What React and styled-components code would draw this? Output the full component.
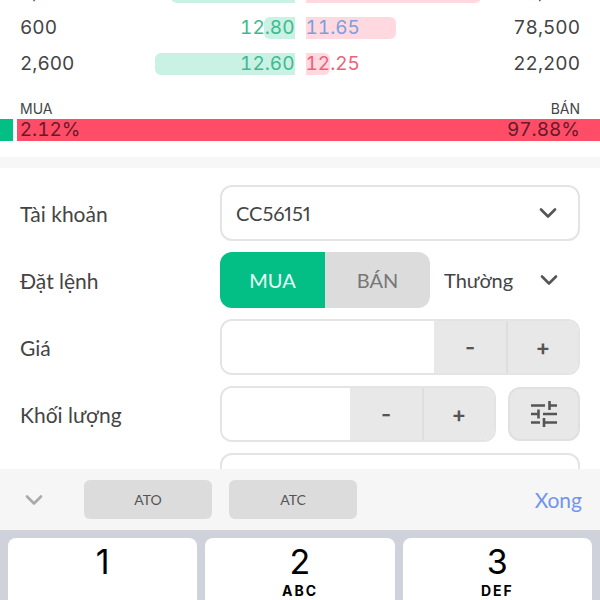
import { useState } from "react";
import styled, { createGlobalStyle } from "styled-components";

const GlobalStyle = createGlobalStyle`
  * {
    box-sizing: border-box;
  }

  body {
    margin: 0;
    background: #fff;
    color: #444;
    font-family: Lato, "Noto Sans", sans-serif;
    font-size: 20px;
  }

  button, input, select {
    margin: 0;
    padding: 0;
    border: 0;
    color: inherit;
    font: inherit;
  }

  button {
    cursor: pointer;
  }
`;

const PageCss = styled.div`
  height: 100vh;
  display: flex;
  flex-direction: column;
  overflow: hidden;
`;

/* the list is scrolled, its first row is cut by the top edge */
const OrderBook = styled.div`
  margin-top: -26px;
  padding: 0 20px;
  font-family: Inter, sans-serif;
  font-size: 19px;
  font-variant-numeric: tabular-nums;
`;

const OrderRow = styled.div`
  height: 36px;
  display: grid;
  grid-template-columns: 1fr 1fr;
  align-items: center;
  column-gap: 11px;
`;

const Side = styled.div`
  position: relative;
  display: flex;
  flex-direction: ${(props) => (props.$sell ? "row-reverse" : "row")};
  justify-content: space-between;
  line-height: 22px;
`;

const Depth = styled.div`
  position: absolute;
  top: 0;
  bottom: 0;
  ${(props) => (props.$sell ? "left: 0;" : "right: 0;")}
  border-radius: ${(props) => (props.$sell ? "0 6px 6px 0" : "6px 0 0 6px")};
  background: ${(props) => (props.$sell ? "#ffd9df" : "#c9f1e4")};
`;

const Price = styled.span`
  position: relative;
  color: ${(props) => props.$color};
`;

const Volume = styled.span`
  position: relative;
`;

const RatioLabels = styled.div`
  display: flex;
  justify-content: space-between;
  margin-top: 16px;
  padding: 0 20px;
  font-family: Inter, sans-serif;
  font-size: 14px;
  line-height: 21px;
`;

const RatioBar = styled.div`
  display: flex;
  gap: 4px;
  height: 22px;
  font-family: Inter, sans-serif;
  font-size: 19px;
  font-variant-numeric: tabular-nums;
  line-height: 22px;
`;

const BuyPart = styled.div`
  background: #03bf86;
`;

const SellPart = styled.div`
  flex: 1;
  display: flex;
  justify-content: space-between;
  padding: 0 20px 0 3px;
  background: #ff4d68;
  color: #651a2a;
`;

const Divider = styled.div`
  flex: none;
  height: 11px;
  margin-top: 16px;
  background: #f7f7f7;
`;

const OrderForm = styled.form`
  flex: 1;
  min-height: 0;
  overflow: hidden;
  padding: 17px 20px 0;
  display: flex;
  flex-direction: column;
  gap: 11px;
`;

const Field = styled.div`
  flex: none;
  height: 56px;
  display: grid;
  grid-template-columns: 200px minmax(0, 1fr);
  align-items: center;

  label {
    font-size: 21px;
  }
`;

const Control = styled.div`
  display: flex;
  align-items: center;
  height: 56px;
`;

const SelectWrap = styled.div`
  flex: 1;
  height: 56px;
  display: grid;
  align-items: center;
  border: 2px solid ${(props) => (props.$plain ? "transparent" : "#e4e4e4")};
  border-radius: 12px;

  select, svg {
    grid-area: 1 / 1;
  }

  select {
    width: 100%;
    height: 52px;
    padding-left: ${(props) => (props.$plain ? "12px" : "14px")};
    appearance: none;
    background: transparent;
    outline: none;
    font-variant-numeric: proportional-nums;
  }

  svg {
    justify-self: end;
    margin-right: ${(props) => (props.$plain ? "20px" : "21px")};
    pointer-events: none;
  }
`;

const Toggle = styled.div`
  flex: none;
  display: flex;
  height: 56px;
  width: 210px;
  border-radius: 12px;
  overflow: hidden;
`;

const ToggleButton = styled.button`
  flex: 1;
  background: ${(props) => (props.$active ? "#03bf86" : "#dcdcdc")};
  color: ${(props) => (props.$active ? "#e9fff8" : "#777")};
`;

const Stepper = styled.div`
  flex: 1;
  min-width: 0;
  display: flex;
  height: 56px;
  border: 2px solid #e4e4e4;
  border-radius: 12px;
  overflow: hidden;

  input {
    flex: 1;
    min-width: 0;
    padding: 0 14px;
    outline: none;
  }
`;

const StepButton = styled.button`
  flex: none;
  width: 72px;
  background: #e8e8e8;
  color: #555;
  font-family: Inter, sans-serif;
  font-size: 22px;
  font-weight: 600;

  & + & {
    border-left: 2px solid #dedede;
  }
`;

const FilterButton = styled.button`
  flex: none;
  width: 72px;
  height: 54px;
  margin-left: 12px;
  display: flex;
  align-items: center;
  justify-content: center;
  border: 2px solid #e0e0e0;
  border-radius: 12px;
  background: #e8e8e8;
`;

const TextBox = styled.input`
  flex: 1;
  height: 56px;
  padding: 0 14px;
  border: 2px solid #e4e4e4;
  border-radius: 12px;
  outline: none;
`;

const Toolbar = styled.div`
  flex: none;
  height: 61px;
  display: flex;
  align-items: center;
  padding: 0 18px 0 25px;
  background: #f6f6f6;
`;

const HideButton = styled.button`
  display: flex;
  width: 59px;
  background: none;
`;

const QuickButton = styled.button`
  width: 128px;
  height: 39px;
  margin-right: 17px;
  border-radius: 6px;
  background: #dcdcdc;
  color: #555;
  font-size: 14px;
`;

const DoneButton = styled.button`
  margin-left: auto;
  background: none;
  color: #7294ef;
  font-size: 21px;
`;

const Keypad = styled.div`
  flex: none;
  height: 70px;
  overflow: hidden;
  display: grid;
  grid-template-columns: repeat(3, 1fr);
  gap: 8px;
  padding: 8px 8px 0;
  background: #d0d2db;
`;

const Key = styled.button`
  height: 92px;
  display: flex;
  flex-direction: column;
  align-items: center;
  padding-top: 4px;
  border-radius: 8px;
  background: #fff;
  color: #000;
  font-family: Inter, sans-serif;
  font-size: 34px;
  line-height: 40px;

  small {
    font-size: 14px;
    font-weight: 700;
    letter-spacing: 2px;
    line-height: 18px;
  }
`;

const Chevron = ({ color = "#555" }) => (
    <svg width="18" height="14" viewBox="0 0 18 14" fill="none" stroke={color} strokeWidth="2.6" strokeLinecap="round" strokeLinejoin="round">
        <path d="M2 3.5L9 10.5L16 3.5" />
    </svg>
);

const TuneIcon = () => (
    <svg width="26" height="26" viewBox="0 0 26 26" fill="none" stroke="#555" strokeWidth="2.6">
        <path d="M0 4.5H14M18.5 0V9M18.5 4.5H26" />
        <path d="M0 13H7M7.5 8.5V17.5M12 13H26" />
        <path d="M0 21.5H9M13 17V26M13 21.5H26" />
    </svg>
);

const orders = [
    { buyVol: "1,000", buy: "12.90", buyDepth: 45, sell: "11.60", sellColor: "#7b9fe0", sellDepth: 64, sellVol: "50,000" },
    { buyVol: "600", buy: "12.80", buyDepth: 11, sell: "11.65", sellColor: "#7b9fe0", sellDepth: 33, sellVol: "78,500" },
    { buyVol: "2,600", buy: "12.60", buyDepth: 51, sell: "12.25", sellColor: "#f0607c", sellDepth: 9, sellVol: "22,200" },
];

const keys = [
    { num: "1", letters: "" },
    { num: "2", letters: "ABC" },
    { num: "3", letters: "DEF" },
];

const NumberField = ({ id, label, children }) => {
    const [value, setValue] = useState("");
    const step = (n) => setValue(String(Math.max(0, Number(value) + n)));
    return (
        <Field>
            <label htmlFor={id}>{label}</label>
            <Control>
                <Stepper>
                    <input id={id} inputMode="decimal" value={value} onChange={(e) => setValue(e.target.value)} />
                    <StepButton type="button" onClick={() => step(-1)}>-</StepButton>
                    <StepButton type="button" onClick={() => step(1)}>+</StepButton>
                </Stepper>
                {children}
            </Control>
        </Field>
    );
};

const App = () => {
    const [side, setSide] = useState("MUA");
    return (
        <PageCss>
            <GlobalStyle />
            <OrderBook>
                {orders.map((row) => (
                    <OrderRow key={row.buy}>
                        <Side>
                            <Depth style={{ width: row.buyDepth + "%" }} />
                            <Volume>{row.buyVol}</Volume>
                            <Price $color="#3dbb8f">{row.buy}</Price>
                        </Side>
                        <Side $sell>
                            <Depth $sell style={{ width: row.sellDepth + "%" }} />
                            <Volume>{row.sellVol}</Volume>
                            <Price $color={row.sellColor}>{row.sell}</Price>
                        </Side>
                    </OrderRow>
                ))}
            </OrderBook>
            <RatioLabels>
                <span>MUA</span>
                <span>BÁN</span>
            </RatioLabels>
            <RatioBar>
                <BuyPart style={{ width: "2.12%" }} />
                <SellPart>
                    <span>2.12%</span>
                    <span>97.88%</span>
                </SellPart>
            </RatioBar>
            <Divider />
            <OrderForm onSubmit={(e) => e.preventDefault()}>
                <Field>
                    <label htmlFor="account">Tài khoản</label>
                    <Control>
                        <SelectWrap>
                            <select id="account">
                                <option>CC56151</option>
                            </select>
                            <Chevron />
                        </SelectWrap>
                    </Control>
                </Field>
                <Field>
                    <label htmlFor="orderType">Đặt lệnh</label>
                    <Control>
                        <Toggle>
                            {["MUA", "BÁN"].map((name) => (
                                <ToggleButton key={name} type="button" $active={side === name} onClick={() => setSide(name)}>
                                    {name}
                                </ToggleButton>
                            ))}
                        </Toggle>
                        <SelectWrap $plain>
                            <select id="orderType">
                                <option>Thường</option>
                            </select>
                            <Chevron />
                        </SelectWrap>
                    </Control>
                </Field>
                <NumberField id="price" label="Giá" />
                <NumberField id="volume" label="Khối lượng">
                    <FilterButton type="button" aria-label="Tùy chọn">
                        <TuneIcon />
                    </FilterButton>
                </NumberField>
                <Field>
                    <span />
                    <Control>
                        <TextBox aria-label="PIN" />
                    </Control>
                </Field>
            </OrderForm>
            <Toolbar>
                <HideButton type="button" aria-label="Ẩn bàn phím">
                    <Chevron color="#aaa" />
                </HideButton>
                <QuickButton type="button">ATO</QuickButton>
                <QuickButton type="button">ATC</QuickButton>
                <DoneButton type="button">Xong</DoneButton>
            </Toolbar>
            <Keypad>
                {keys.map((key) => (
                    <Key key={key.num} type="button">
                        {key.num}
                        {key.letters && <small>{key.letters}</small>}
                    </Key>
                ))}
            </Keypad>
        </PageCss>
    );
};

export default App;
